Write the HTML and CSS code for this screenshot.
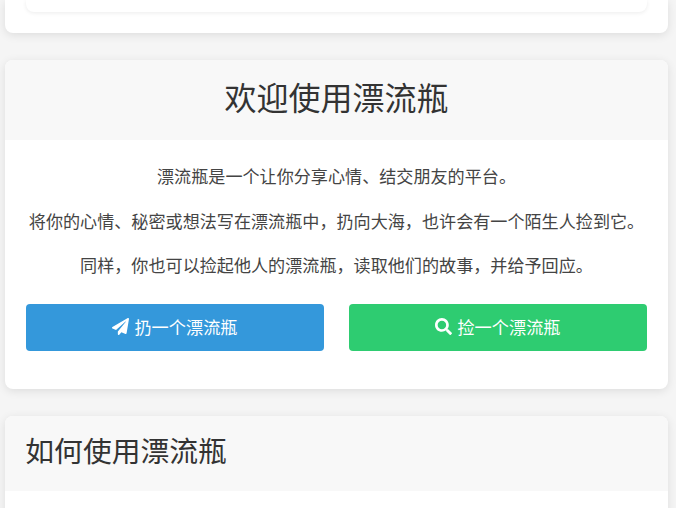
FILE: index.html
```html
<!DOCTYPE html>
<html lang="zh-CN">
<head>
  <meta charset="UTF-8" />
  <meta name="viewport" content="width=device-width, initial-scale=1.0" />
  <title>漂流瓶</title>
  <link rel="stylesheet" href="styles.css">
</head>
<body>
  <div class="card card-cut">
    <div class="inner-box"></div>
  </div>

  <div class="card">
    <div class="card-header center">
      <h1>欢迎使用漂流瓶</h1>
    </div>
    <div class="card-body">
      <p>漂流瓶是一个让你分享心情、结交朋友的平台。</p>
      <p>将你的心情、秘密或想法写在漂流瓶中&#xFF0C;扔向大海&#xFF0C;也许会有一个陌生人捡到它。</p>
      <p>同样&#xFF0C;你也可以捡起他人的漂流瓶&#xFF0C;读取他们的故事&#xFF0C;并给予回应。</p>
      <div class="actions">
        <a class="btn btn-blue" href="#">
          <svg class="icon" viewBox="0 0 512 512"><path d="M476 3.2L12.5 270.6c-18.1 10.4-15.8 35.6 2.2 43.2L121 358.4l287.3-253.2c5.5-4.9 13.3 2.6 8.6 8.3L176 407v80.5c0 23.6 28.5 32.9 42.5 15.8L282 426l124.6 52.2c14.2 6 30.4-2.9 33-18.2l72-432C515 7.8 493.3-6.8 476 3.2z"/></svg>
          扔一个漂流瓶
        </a>
        <a class="btn btn-green" href="#">
          <svg class="icon" viewBox="0 0 512 512"><path d="M505 442.7L405.3 343c-4.5-4.5-10.6-7-17-7H372c27.6-35.3 44-79.7 44-128C416 93.1 322.9 0 208 0S0 93.1 0 208s93.1 208 208 208c48.3 0 92.7-16.4 128-44v16.3c0 6.4 2.5 12.5 7 17l99.7 99.7c9.4 9.4 24.6 9.4 33.9 0l28.3-28.3c9.4-9.4 9.4-24.6.1-34zM208 336c-70.7 0-128-57.2-128-128 0-70.7 57.2-128 128-128 70.7 0 128 57.2 128 128 0 70.7-57.2 128-128 128z"/></svg>
          捡一个漂流瓶
        </a>
      </div>
    </div>
  </div>

  <div class="card">
    <div class="card-header card-header-small">
      <h2>如何使用漂流瓶</h2>
    </div>
    <div class="card-body"></div>
  </div>
</body>
</html>
```

FILE: styles.css
```css
html,
body {
  height: 100%;
  overflow: hidden;
}

body {
  margin: 0;
  padding: 0 8.3px 0 5.3px;
  box-sizing: border-box;
  font-family: "Noto Sans CJK SC", "Liberation Sans", sans-serif;
  background-color: #f5f5f5;
  color: #333;
}

.card {
  background-color: white;
  border-radius: 8px;
  margin-bottom: 27px;
  box-shadow: 0 2px 10px rgba(0, 0, 0, 0.1);
  overflow: hidden;
}

/* first card is scrolled mostly out of view */
.card-cut {
  height: 33px;
  border-radius: 0 0 8px 8px;
  padding: 0 21px;
  box-sizing: border-box;
}

.inner-box {
  height: 12px;
  background-color: white;
  border-radius: 0 0 8px 8px;
  box-shadow: 0 1px 4px rgba(0, 0, 0, 0.08);
}

.card-header {
  background-color: #f8f8f8;
  padding: 0 21px 9px;
  height: 80px;
  box-sizing: border-box;
  display: flex;
  align-items: center;
}

.card-header-small {
  height: 75px;
  padding: 0 20px 8px;
}

.center {
  justify-content: center;
}

.card-header h1 {
  margin: 0;
  font-size: 32px;
  font-weight: 400;
}

.card-header h2 {
  margin: 0;
  font-size: 28.8px;
  font-weight: 400;
}

.card-body {
  padding: 22px 21px;
  text-align: center;
  font-size: 17.1px;
  line-height: 27px;
  color: #444;
}

.card-body p {
  margin: 0 0 17.5px;
}

.actions {
  display: flex;
  gap: 25.6px;
  margin-top: 26px;
  margin-bottom: 16px;
}

.btn {
  flex: 1;
  height: 47px;
  padding-bottom: 2px;
  box-sizing: border-box;
  display: flex;
  align-items: center;
  justify-content: center;
  gap: 5px;
  color: white;
  font-size: 17.2px;
  text-decoration: none;
  border-radius: 4px;
}

.btn-blue {
  background-color: #3498db;
}

.btn-green {
  background-color: #2ecc71;
}

.icon {
  width: 17px;
  height: 17px;
  fill: white;
}
```
